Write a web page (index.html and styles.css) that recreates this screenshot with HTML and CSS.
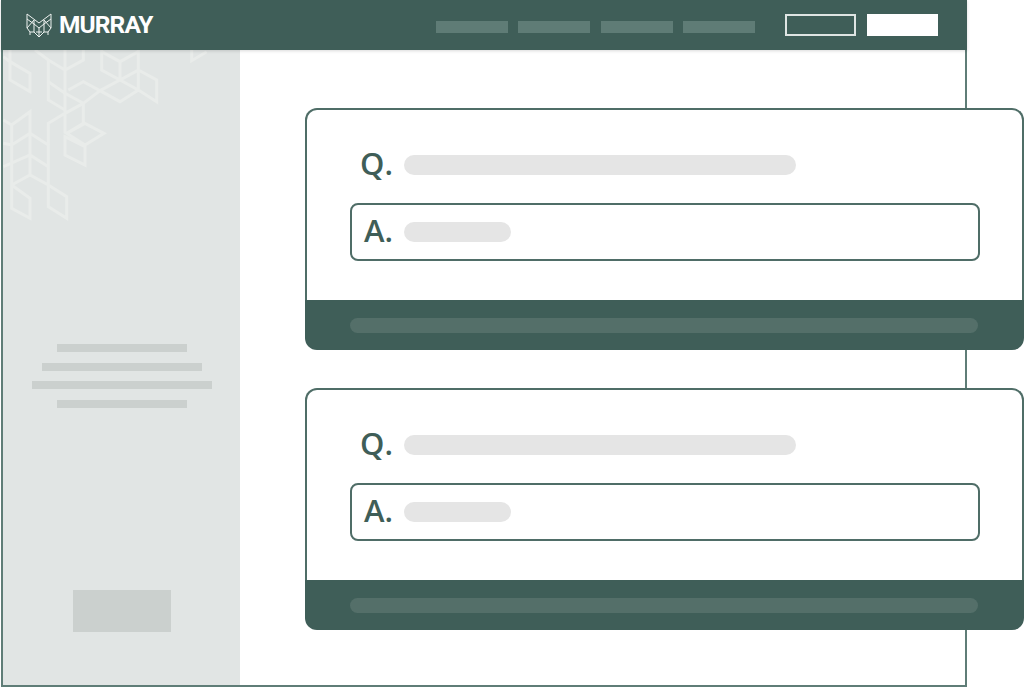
FILE: index.html
```html
<!DOCTYPE html>
<html lang="en">
<head>
<meta charset="utf-8">
<title>Murray</title>
<link rel="stylesheet" href="styles.css">
</head>
<body>
<div class="window">
  <header class="topbar">
    <div class="logo">
      <svg class="logo-mark" viewBox="0 0 26 24" fill="none" stroke="#eef2f0" stroke-width="1">
        <path d="M1 1l12 9 12-9M1 1v14l3 4v3M25 1v14l-3 4v3"/>
        <path d="M1 6l7 5 5 4 5-4 7-5M1 15l7-8M25 15l-7-8M8 7v12M18 7v12"/>
        <path d="M4 19h4l5 5 5-5h4M13 15v9M10 19h6"/>
      </svg>
      <span class="logo-text">MURRAY</span>
    </div>
    <nav class="nav">
      <span class="nav-item"></span>
      <span class="nav-item"></span>
      <span class="nav-item"></span>
      <span class="nav-item"></span>
    </nav>
    <div class="actions">
      <span class="btn btn-outline"></span>
      <span class="btn btn-solid"></span>
    </div>
  </header>
  <div class="body">
    <aside class="sidebar">
      <svg class="pattern" viewBox="0 0 720 690" fill="none" stroke="#e9ecea" stroke-width="9">
        <path d="M10 170l20 15 60 35v55l-60-35v-90M30 185v55"/>
        <path d="M105 150l40 30 50 30 55-30v-30M195 150v60M145 180v120l50 30M145 245l50 35 55 30 50-38-50-27-45 25M195 210v70"/>
        <path d="M305 150v60l55 30 55-30v-60M305 155l55 30 55-30M360 185v55M300 272l60-32 55 30-55 35zM415 210l55 30v65l-55-35z"/>
        <path d="M250 310v60l-50 30M250 310l-55 30-50 30v65M195 280v120M200 400l55-30 57 30-57 35zM195 410l60 30v55l-60-30z"/>
        <path d="M10 360l25 15 55-40v65l-55 35-25-5M35 375v180M90 400l55 35v120M90 400v125M10 500l80-35 55 35M35 555l55-30 55 30 55 35v65l-55-35v-65M35 555l55 40v60l-55-30z"/>
        <path d="M575 150v32l45-27"/>
      </svg>
      <div class="copy">
        <span class="line line-md"></span>
        <span class="line line-lg"></span>
        <span class="line line-xl"></span>
        <span class="line line-md"></span>
      </div>
      <span class="side-btn"></span>
    </aside>
    <main class="main">
      <section class="card">
        <div class="card-body">
          <div class="question"><span class="mark mark-q">Q.</span><span class="pill pill-long"></span></div>
          <div class="answer"><span class="mark mark-a">A.</span><span class="pill pill-short"></span></div>
        </div>
        <div class="card-foot"><span class="foot-bar"></span></div>
      </section>
      <section class="card">
        <div class="card-body">
          <div class="question"><span class="mark mark-q">Q.</span><span class="pill pill-long"></span></div>
          <div class="answer"><span class="mark mark-a">A.</span><span class="pill pill-short"></span></div>
        </div>
        <div class="card-foot"><span class="foot-bar"></span></div>
      </section>
    </main>
  </div>
</div>
</body>
</html>
```
FILE: styles.css
```css
* { box-sizing: border-box; }
html, body { margin: 0; height: 100%; background: #fff; overflow: hidden; }
.window {
  width: 966px; height: 687px; margin-left: 1px;
  display: flex; flex-direction: column;
  border: solid #5f7d77; border-width: 0 2px 2px 2px;
  font-family: "Open Sans", sans-serif;
}
.topbar {
  flex: none; height: 50px; margin: 0 -2px;
  background: #3f5e58;
  display: flex; align-items: center;
  padding: 0 29px 0 25px;
  box-shadow: 0 1px 3px rgba(0,0,0,.15);
  position: relative; z-index: 2;
}
.logo { display: flex; align-items: center; gap: 7px; }
.logo-mark { width: 26px; height: 24px; display: block; }
.logo-text {
  font-family: Roboto, sans-serif; font-weight: 700; font-size: 24.5px;
  letter-spacing: -.9px; color: #fff; line-height: 1;
}
.nav { display: flex; gap: 10.4px; margin: 4px 30px 0 auto; }
.nav-item { width: 72px; height: 12px; background: #5f7c76; }
.actions { display: flex; gap: 11px; }
.btn { width: 71px; height: 22px; display: block; }
.btn-outline { border: 2px solid #dfe5e3; }
.btn-solid { background: #fff; }
.body { flex: 1; display: flex; min-height: 0; }
.sidebar {
  flex: none; width: 237px; background: #e1e5e4;
  position: relative; overflow: hidden;
  display: flex; flex-direction: column; align-items: center;
  padding-top: 294px;
}
.pattern { position: absolute; left: -3px; top: -50px; width: 240px; height: 230px; }
.copy { display: flex; flex-direction: column; align-items: center; gap: 10.7px; }
.line { display: block; height: 8px; background: #cbd0ce; }
.line-md { width: 130px; }
.line-lg { width: 160px; }
.line-xl { width: 180px; }
.side-btn { display: block; width: 98px; height: 42px; background: #cbd0ce; margin-top: 182px; }
.main { flex: 1; padding: 58px 0 0 65px; display: flex; flex-direction: column; gap: 38px; }
.card {
  width: 719px; height: 242px; flex: none;
  display: flex; flex-direction: column;
}
.card-body {
  flex: 1; padding: 40px 43px 0;
  background: #fff;
  border: 2px solid #4f6d67; border-bottom: 0;
  border-radius: 12px 12px 0 0;
}
.question { display: flex; align-items: center; height: 30px; padding-left: 10px; }
.answer {
  margin-top: 23px; height: 58px; width: 630px;
  border: 2px solid #4f6d67; border-radius: 8px;
  display: flex; align-items: center; padding-left: 12px;
}
.mark { font-size: 31px; font-weight: 600; color: #3f5e58; line-height: 1; flex: none; margin-bottom: 3px; }
.mark-q { width: 44px; }
.mark-a { width: 40px; }
.pill { display: block; height: 20px; border-radius: 10px; background: #e5e5e5; }
.pill-long { width: 392px; }
.pill-short { width: 107px; }
.card-foot {
  flex: none; height: 50px;
  background: #3f5e58; border-radius: 0 0 12px 12px;
  display: flex; align-items: center; padding: 0 45px;
}
.foot-bar { display: block; width: 628px; height: 15px; border-radius: 8px; background: #546f69; }
```
